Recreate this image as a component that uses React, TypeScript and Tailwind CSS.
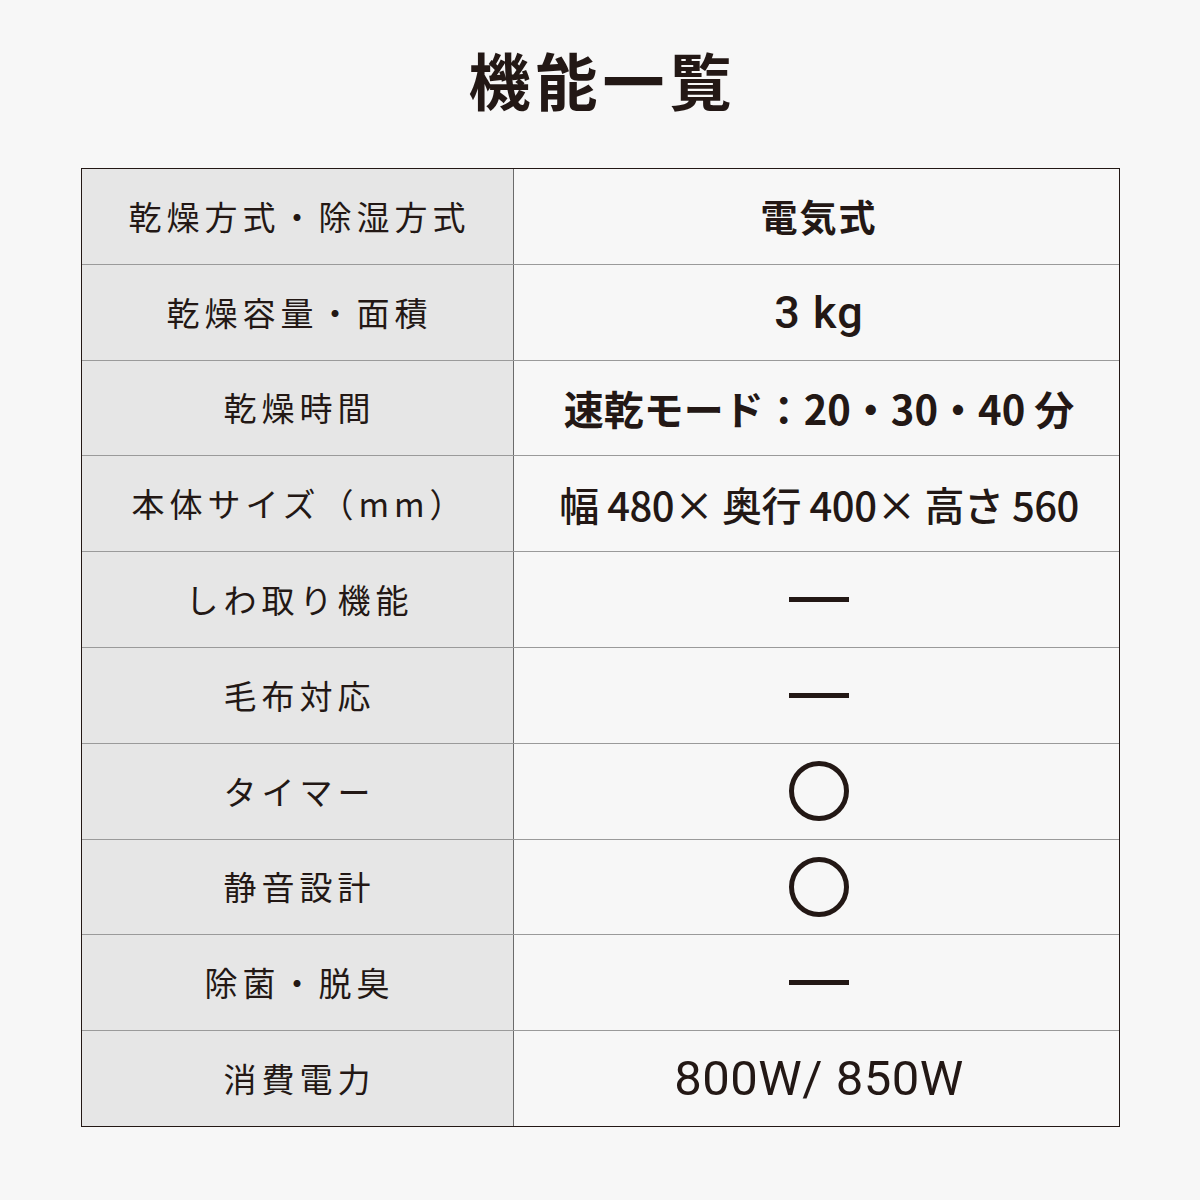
import React from "react";

const FONT = { fontFamily: '"Noto Sans CJK JP", "Noto Sans", sans-serif' };
const MIX = { fontFamily: 'Roboto, "Noto Sans CJK JP", sans-serif' };

type Val =
  | { kind: "text"; text: string; cls: string; mix?: boolean }
  | { kind: "dash" }
  | { kind: "circle" };

const rows: { label: string; value: Val }[] = [
  { label: "乾燥方式・除湿方式", value: { kind: "text", text: "電気式", cls: "text-[37px] font-bold tracking-[2px]" } },
  { label: "乾燥容量・面積", value: { kind: "text", text: "3 kg", cls: "text-[45px] font-medium tracking-[1px]", mix: true } },
  { label: "乾燥時間", value: { kind: "text", text: "速乾モード：20・30・40 分", cls: "text-[40px] font-bold", mix: false } },
  { label: "本体サイズ（mm）", value: { kind: "text", text: "幅 480× 奥行 400× 高さ 560", cls: "text-[40px] font-medium tracking-[-0.5px]", mix: false } },
  { label: "しわ取り機能", value: { kind: "dash" } },
  { label: "毛布対応", value: { kind: "dash" } },
  { label: "タイマー", value: { kind: "circle" } },
  { label: "静音設計", value: { kind: "circle" } },
  { label: "除菌・脱臭", value: { kind: "dash" } },
  { label: "消費電力", value: { kind: "text", text: "800W/ 850W", cls: "text-[49px] font-normal tracking-[0.5px]", mix: true } },
];

function Value({ v }: { v: Val }) {
  if (v.kind === "dash") return <span className="block w-[60px] h-[5px] bg-[#231815]" />;
  if (v.kind === "circle")
    return <span className="block w-[60px] h-[60px] rounded-full border-[5px] border-[#231815]" />;
  return (
    <span className={"leading-none whitespace-nowrap " + v.cls} style={v.mix ? MIX : undefined}>
      {v.text}
    </span>
  );
}

export default function App() {
  return (
    <div className="w-[1200px] h-[1200px] bg-[#f7f7f7] flex flex-col items-center text-[#231815]" style={FONT}>
      <h1 className="mt-[39px] h-[80px] leading-[80px] text-[62px] font-bold tracking-[5px] pl-[5px]">機能一覧</h1>
      <div className="mt-[49px] w-[1039px] h-[959px] border-[1.5px] border-[#231815] flex flex-col">
        {rows.map((r, i) => (
          <div key={i} className={"flex-1 flex " + (i > 0 ? "border-t border-[#9a9a9a]" : "")}>
            <div className="w-[432px] bg-[#e6e6e6] border-r border-[#6b6b6b] flex items-center justify-center">
              <span className="text-[33px] tracking-[5px] pl-[5px] leading-none whitespace-nowrap">{r.label}</span>
            </div>
            <div className="flex-1 flex items-center justify-center pl-[6px]">
              <Value v={r.value} />
            </div>
          </div>
        ))}
      </div>
    </div>
  );
}
